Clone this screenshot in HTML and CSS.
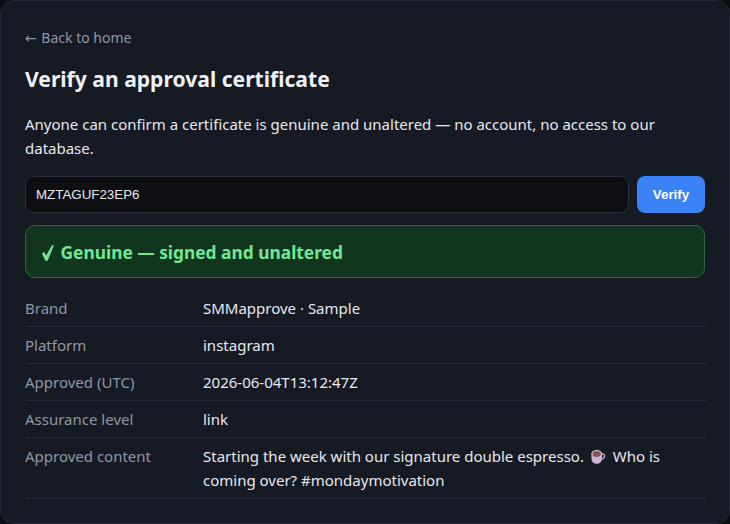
FILE: index.html
```html
<!DOCTYPE html>
<html lang="en">
<head>
    <meta charset="UTF-8">
    <meta name="viewport" content="width=device-width, initial-scale=1.0">
    <title>Verify an approval certificate</title>
    <link rel="stylesheet" href="styles.css">
</head>
<body>
    <div class="card">
        <a class="back" href="#"><span class="arrow">←</span> Back to home</a>
        <h1>Verify an approval certificate</h1>
        <p class="intro">Anyone can confirm a certificate is genuine and unaltered — no account, no access to our database.</p>

        <form class="verify-form">
            <input class="code-input" type="text" value="MZTAGUF23EP6">
            <button class="verify-btn" type="button">Verify</button>
        </form>

        <div class="result">
            <svg class="check" viewBox="0 0 12 16" aria-hidden="true">
                <path d="M0 8.6 2.2 7 4.2 10.6 10 0.3H12L5.6 15.7H3.4z" fill="currentColor"/>
            </svg>
            Genuine — signed and unaltered
        </div>

        <div class="details">
            <div class="row">
                <div class="label">Brand</div>
                <div class="value">SMMapprove · Sample</div>
            </div>
            <div class="row">
                <div class="label">Platform</div>
                <div class="value">instagram</div>
            </div>
            <div class="row">
                <div class="label">Approved (UTC)</div>
                <div class="value">2026-06-04T13:12:47Z</div>
            </div>
            <div class="row">
                <div class="label">Assurance level</div>
                <div class="value">link</div>
            </div>
            <div class="row">
                <div class="label">Approved content</div>
                <div class="value">Starting the week with our signature double espresso.
                    <svg class="cup" viewBox="0 0 16 16" aria-hidden="true">
                        <path d="M11 5.5c2.6-1.2 4.2.4 3.4 2.4-.6 1.6-2.2 2.6-4 3" fill="none" stroke="#cdb8d6" stroke-width="1.4"/>
                        <path d="M1.5 4.5v5.2c0 3 2.4 5 5.2 5s5.3-2 5.3-5V4.5z" fill="#c9b6d6"/>
                        <ellipse cx="6.7" cy="4.6" rx="5.3" ry="3.6" fill="#d8c8e0"/>
                        <ellipse cx="6.7" cy="5" rx="4.2" ry="3" fill="#7f5358"/>
                    </svg>
                    Who is<br>coming over? #mondaymotivation</div>
            </div>
        </div>
    </div>
</body>
</html>
```
FILE: styles.css
```css
* {
    box-sizing: border-box;
}

html, body {
    height: 100%;
}

body {
    margin: 0;
    font-family: "Noto Sans", "Open Sans", sans-serif;
    background-color: #0b0d12;
    color: #e6e9ef;
}

.card {
    height: 100%;
    padding: 24px;
    background: #161a22;
    border: 1px solid #262b36;
    border-radius: 14px;
    overflow: hidden;
}

.back {
    display: block;
    font-size: 14px;
    line-height: 26px;
    color: #8f97a5;
    text-decoration: none;
}

.arrow {
    font-family: "DejaVu Sans", sans-serif;
    font-size: 14px;
    margin-right: 1px;
}

h1 {
    margin: 14px 0 0;
    font-size: 21.1px;
    line-height: 28px;
    font-weight: 700;
    color: #eef1f6;
}

.intro {
    margin: 19px 0 0;
    font-size: 15px;
    line-height: 24px;
}

.verify-form {
    display: flex;
    gap: 8px;
    margin-top: 16px;
}

.code-input {
    flex: 1;
    height: 37px;
    padding: 0 10px;
    font-family: "Liberation Sans", Arial, sans-serif;
    font-size: 13.33px;
    color: #e6e9ef;
    background: #0d0f13;
    border: 1px solid #2a2f3b;
    border-radius: 8px;
}

.verify-btn {
    width: 68px;
    height: 37px;
    font-family: "Liberation Sans", Arial, sans-serif;
    font-size: 13.33px;
    font-weight: 700;
    color: #ffffff;
    background: #3b82f6;
    border: 0;
    border-radius: 8px;
}

.result {
    margin-top: 12px;
    padding: 14px 15px 12px;
    font-size: 17.35px;
    line-height: 25px;
    font-weight: 700;
    color: #70e892;
    background: #12351f;
    border: 1px solid #2a6b3c;
    border-radius: 10px;
}

.check {
    width: 12px;
    height: 16px;
    margin: 0 2px 0 1px;
    vertical-align: -2px;
}

.details {
    margin-top: 12px;
}

.row {
    display: flex;
    padding: 6px 0;
    font-size: 15px;
    line-height: 24px;
    border-bottom: 1px solid #262b36;
}

.label {
    width: 178px;
    flex-shrink: 0;
    color: #8f97a5;
}

.cup {
    width: 16px;
    height: 16px;
    vertical-align: -3px;
    margin: 0 3px 0 2px;
}
```
